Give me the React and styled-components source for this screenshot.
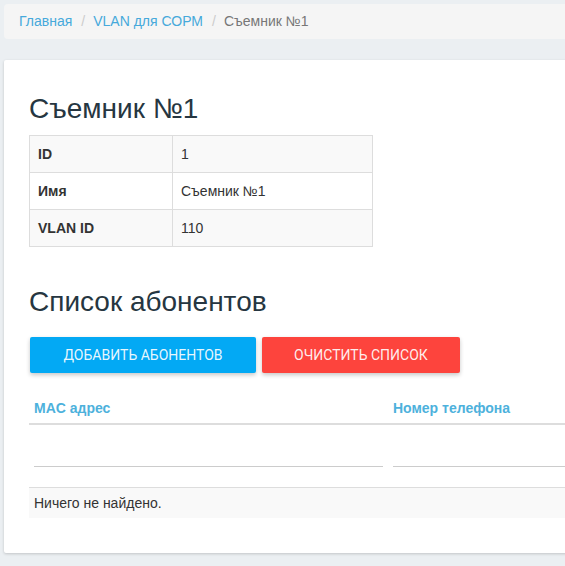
import React from "react";
import styled, { createGlobalStyle } from "styled-components";

const Global = createGlobalStyle`
  html, body { margin: 0; padding: 0; }
  body {
    background: #ebeff2;
    font-family: "Liberation Sans", Arial, sans-serif;
    font-size: 14px;
    line-height: 20px;
    color: #333;
    overflow: hidden;
  }
  * { box-sizing: border-box; }
`;

const Page = styled.div`
  width: 760px;
  padding: 4px 0 14px 4px;
  display: flex;
  flex-direction: column;
  gap: 21px;
`;

const Breadcrumb = styled.ol`
  list-style: none;
  margin: 0;
  padding: 8px 15px;
  height: 35px;
  line-height: 19px;
  background: #f5f5f5;
  border-radius: 4px;
  display: flex;
  align-items: center;
`;

const Crumb = styled.li`
  color: ${(p) => (p.$active ? "#777" : "#46a9db")};
  &:not(:first-child)::before {
    content: "/";
    padding: 0 8px 0 9px;
    color: #ccc;
  }
`;

const Card = styled.div`
  background: #fff;
  box-shadow: 0 1px 3px rgba(0, 0, 0, 0.18);
  border-radius: 2px;
  padding: 15px 25px 35px;
`;

const Heading = styled.h3`
  font-family: "Liberation Sans", Arial, sans-serif;
  font-weight: 400;
  font-size: 28px;
  line-height: 31px;
  color: #263641;
  margin: ${(p) => (p.$first ? "18px" : "39px")} 0 ${(p) => (p.$first ? "11px" : "20px")};
`;

const InfoTable = styled.table`
  border-collapse: collapse;
  width: 344px;
  border: 1px solid #ddd;
`;

const InfoRow = styled.tr`
  background: ${(p) => (p.$striped ? "#f9f9f9" : "#fff")};
`;

const InfoTh = styled.th`
  width: 143px;
  text-align: left;
  font-weight: 700;
  padding: 8px;
  border: 1px solid #ddd;
  line-height: 20px;
`;

const InfoTd = styled.td`
  padding: 8px;
  border: 1px solid #ddd;
  line-height: 20px;
`;

const Buttons = styled.div`
  display: flex;
  gap: 6px;
  padding-left: 1px;
`;

const Button = styled.button`
  height: 36px;
  border: none;
  border-radius: 2px;
  padding: 0 ${(p) => p.$px}px;
  background: ${(p) => p.$bg};
  color: rgba(255, 255, 255, 0.92);
  font-family: Roboto, "Liberation Sans", sans-serif;
  font-size: 14px;
  font-weight: 400;
  text-transform: uppercase;
  box-shadow: 0 2px 4px rgba(0, 0, 0, 0.22);
  cursor: pointer;
`;

const ListTable = styled.table`
  margin-top: 17px;
  border-collapse: collapse;
  width: 100%;
  table-layout: fixed;
`;

const HeadCell = styled.th`
  text-align: left;
  color: #4db1dc;
  font-weight: 700;
  padding: 8px 5px 5px;
  line-height: 20px;
  border-bottom: 2px solid #ddd;
  width: ${(p) => p.$w || "auto"};
`;

const FilterCell = styled.td`
  padding: 8px 5px 20px;
`;

const FilterInput = styled.input`
  display: block;
  width: 100%;
  height: 34px;
  border: none;
  border-bottom: 1px solid #ccc;
  background: transparent;
  outline: none;
  font-family: "Liberation Sans", Arial, sans-serif;
  font-size: 14px;
`;

const EmptyCell = styled.td`
  background: #f9f9f9;
  border-top: 1px solid #ddd;
  padding: 5px;
  line-height: 20px;
`;

export default function App() {
  const info = [
    ["ID", "1"],
    ["Имя", "Съемник №1"],
    ["VLAN ID", "110"],
  ];
  return (
    <>
      <Global />
      <Page>
        <Breadcrumb>
          <Crumb>Главная</Crumb>
          <Crumb>VLAN для СОРМ</Crumb>
          <Crumb $active>Съемник №1</Crumb>
        </Breadcrumb>
        <Card>
          <Heading $first>Съемник №1</Heading>
          <InfoTable>
            <tbody>
              {info.map(([k, v], i) => (
                <InfoRow key={k} $striped={i % 2 === 0}>
                  <InfoTh>{k}</InfoTh>
                  <InfoTd>{v}</InfoTd>
                </InfoRow>
              ))}
            </tbody>
          </InfoTable>
          <Heading>Список абонентов</Heading>
          <Buttons>
            <Button $bg="#03a9f4" $px={33.5}>Добавить абонентов</Button>
            <Button $bg="#fd443d" $px={32}>Очистить список</Button>
          </Buttons>
          <ListTable>
            <thead>
              <tr>
                <HeadCell $w="359px">MAC адрес</HeadCell>
                <HeadCell>Номер телефона</HeadCell>
              </tr>
              <tr>
                <FilterCell>
                  <FilterInput type="text" />
                </FilterCell>
                <FilterCell>
                  <FilterInput type="text" />
                </FilterCell>
              </tr>
            </thead>
            <tbody>
              <tr>
                <EmptyCell colSpan={2}>Ничего не найдено.</EmptyCell>
              </tr>
            </tbody>
          </ListTable>
        </Card>
      </Page>
    </>
  );
}
